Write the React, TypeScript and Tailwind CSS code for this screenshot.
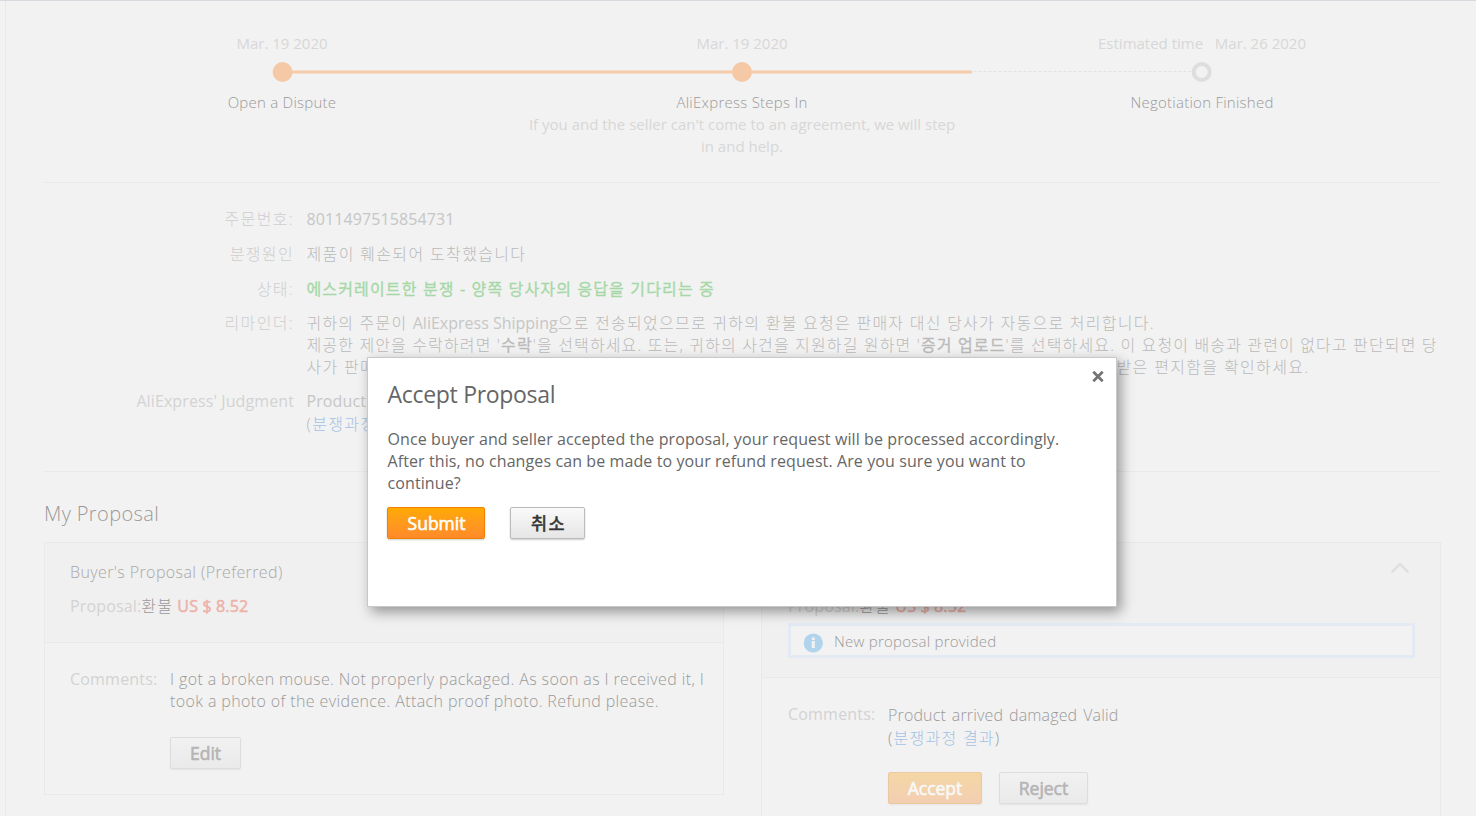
import type { ReactNode } from "react";

function Ko({ children, className = "tracking-[1.35px]" }: { children: ReactNode; className?: string }) {
  return <span className={className}>{children}</span>;
}

function Strong({ children }: { children: ReactNode }) {
  return <b className="font-normal [-webkit-text-stroke:0.3px_currentColor]">{children}</b>;
}

function Row({ label, children, className = "" }: { label: ReactNode; children: ReactNode; className?: string }) {
  return (
    <div className={`flex gap-3 leading-[22px] ${className}`}>
      <div className="w-[250px] shrink-0 text-right text-[#cecece]">{label}</div>
      <div className="flex-1 whitespace-nowrap pl-[0.5px]">{children}</div>
    </div>
  );
}

function Step({ date, title, children }: { date: ReactNode; title: string; children?: ReactNode }) {
  return (
    <div className="flex w-[460px] flex-col items-center text-center">
      <div className="whitespace-pre font-normal text-[#d7d7d7]">{date}</div>
      <div className="mt-[37px] tracking-[0.25px] text-[#9a9a9a]">{title}</div>
      {children}
    </div>
  );
}

function Timeline() {
  return (
    <div className="h-[149px] pl-2 pt-[31px] text-[15px] leading-[22px]">
      <div className="flex">
        <Step date="Mar. 19 2020" title="Open a Dispute" />
        <Step date="Mar. 19 2020" title="AliExpress Steps In">
          <div className="font-normal text-[#d7d7d7]">
            If you and the seller can't come to an agreement, we will step
            <br />
            in and help.
          </div>
        </Step>
        <Step date="Estimated time   Mar. 26 2020" title="Negotiation Finished" />
      </div>
      <svg className="-mt-[95px] ml-[220px]" width="940" height="20" viewBox="0 0 940 20">
        <path d="M10 10H700" stroke="#f6ccaa" strokeWidth="3" />
        <circle cx="10.6" cy="10" r="10" fill="#f5c9a6" />
        <circle cx="470" cy="10" r="10" fill="#f5c9a6" />
        <path d="M701.5 9.5H919" stroke="#e2e2e2" strokeDasharray="3 2" />
        <circle cx="929.7" cy="10" r="8" fill="none" stroke="#dedede" strokeWidth="4" />
      </svg>
    </div>
  );
}

function Button({ className, children }: { className: string; children: ReactNode }) {
  return (
    <button className={`flex h-8 shrink-0 items-center justify-center rounded-[2px] border pt-[2px] text-[17.5px] leading-none font-normal [-webkit-text-stroke:0.6px_currentColor] ${className}`}>
      {children}
    </button>
  );
}

const faded = "border-[#dddddd] bg-linear-to-b from-[#f1f1f1] to-[#eaeaea] text-[#b5b5b5] shadow-[0_1px_2px_rgba(0,0,0,0.06)]";

function Amount() {
  return (
    <div className="leading-[22px] font-normal tracking-[0.15px] text-[#d3d3d3]">
      Proposal:<span className="font-light tracking-[1.3px] text-[#999]">환불</span>
      <span className="ml-1 [-webkit-text-stroke:0.5px_currentColor] text-[#edb1a8]">US $ 8.52</span>
    </div>
  );
}

function Modal() {
  return (
    <div className="absolute left-[367px] top-[357px] h-[250px] w-[750px] border border-[#c8c8c8] bg-white pl-[19px] pt-[21px] font-normal text-[#666] shadow-[4px_5px_12px_rgba(0,0,0,0.38)]">
      <svg className="absolute right-3 top-3" width="12" height="13" viewBox="0 0 12 13">
        <path d="M1.3 1.8L10.7 11.2M10.7 1.8L1.3 11.2" stroke="#737373" strokeWidth="2.7" />
      </svg>
      <h2 className="pl-[0.5px] text-[23px] leading-[30px] tracking-[-0.3px]">Accept Proposal</h2>
      <p className="mt-[19px] whitespace-nowrap pl-[0.5px] text-base leading-[22px] tracking-[0.1px]">
        Once buyer and seller accepted the proposal, your request will be processed accordingly.
        <br />
        After this, no changes can be made to your refund request. Are you sure you want to
        <br />
        continue?
      </p>
      <div className="mt-[13px] flex gap-[25px]">
        <Button className="w-[98px] border-[#f08000] bg-linear-to-b from-[#ffa900] to-[#ff8a29] pl-px text-white shadow-[0_1px_2px_rgba(0,0,0,0.2)]">
          Submit
        </Button>
        <Button className="w-[75px] border-[#bbb] bg-linear-to-b from-[#f9f9f9] to-[#e6e6e6] pl-[2px] tracking-[1.4px] text-[#333] shadow-[0_1px_2px_rgba(0,0,0,0.2)]">
          취소
        </Button>
      </div>
    </div>
  );
}

export default function App() {
  return (
    <div className="relative h-[816px] w-[1476px] overflow-hidden border-t border-[#d8d8de] bg-[#f2f2f2] pl-[5px] font-['Open_Sans','Noto_Sans_CJK_KR',sans-serif] text-base font-light">
      <div className="h-full border-l border-[#e9e9e9] pl-[38px]">
        <div className="w-[1397px]">
          <Timeline />
          <div className="mt-8 h-px bg-[#eaeaea]" />
          <div className="h-[288px] pt-[25px] text-[#bababa]">
            <Row label={<Ko>주문번호:</Ko>}>
              <span className="font-normal tracking-[0.1px] text-[#c6c6c6]">8011497515854731</span>
            </Row>
            <Row className="mt-[13px]" label={<Ko>분쟁원인</Ko>}>
              <Ko>제품이 훼손되어 도착했습니다</Ko>
            </Row>
            <Row className="mt-[13px]" label={<Ko>상태:</Ko>}>
              <Ko className="tracking-[1.15px] text-[#a5d8a6]">
                <Strong>에스커레이트한 분쟁 - 양쪽 당사자의 응답을 기다리는 중</Strong>
              </Ko>
            </Row>
            <Row className="mt-3" label={<Ko>리마인더:</Ko>}>
              <Ko className="tracking-[1.2px]">귀하의 주문이 </Ko>
              <span className="font-normal text-[#c6c6c6]">AliExpress Shipping</span>
              <Ko className="tracking-[1.26px]">으로 전송되었으므로 귀하의 환불 요청은 판매자 대신 당사가 자동으로 처리합니다.</Ko>
              <br />
              <Ko className="tracking-[1.14px]">
                제공한 제안을 수락하려면 '<Strong>수락</Strong>'을 선택하세요. 또는, 귀하의 사건을 지원하길 원하면 '
                <Strong>증거 업로드</Strong>'를 선택하세요. 이 요청이 배송과 관련이 없다고 판단되면 당
              </Ko>
              <div className="flex">
                <span className="w-[810px] tracking-[1.32px]">사가 판매</span>
                <Ko>받은 편지함을 확인하세요.</Ko>
              </div>
            </Row>
            <Row className="mt-3" label={<span className="font-normal tracking-[0.1px] text-[#d3d3d3]">AliExpress' Judgment</span>}>
              <span className="font-normal tracking-[0.1px] text-[#c6c6c6]">Product</span>
              <div className="pt-px">
                <Ko>
                  (<span className="text-[#a3c2e4]">분쟁과정</span>
                </Ko>
              </div>
            </Row>
          </div>
          <div className="h-px bg-[#eaeaea]" />
          <h1 className="mt-7 text-[20px] leading-7 tracking-[0.38px] text-[#9a9a9a]">My Proposal</h1>
          <div className="mt-[14px] flex items-start gap-[37px] text-[#9a9a9a]">
            <section className="h-[253px] w-[680px] border border-[#e9e9e9]">
              <div className="h-[100px] border-b border-[#e9e9e9] bg-[#f0f0f0] pl-[25px] pt-[18px]">
                <div className="leading-[22px] tracking-[0.4px] text-[#a8a8a8]">Buyer's Proposal (Preferred)</div>
                <div className="mt-3">
                  <Amount />
                </div>
              </div>
              <div className="flex pl-[25px] pt-[25px] leading-[22px]">
                <div className="w-[100px] font-normal tracking-[0.2px] text-[#d3d3d3]">Comments:</div>
                <div className="whitespace-nowrap">
                  <span className="tracking-[0.38px]">
                    I got a broken mouse. Not properly packaged. As soon as I received it, I
                    <br />
                    took a photo of the evidence. Attach proof photo. Refund please.
                  </span>
                  <div className="mt-[25px] flex">
                    <Button className={`w-[71px] ${faded}`}>Edit</Button>
                  </div>
                </div>
              </div>
            </section>
            <section className="h-[300px] w-[680px] border border-[#e9e9e9]">
              <div className="h-[135px] border-b border-[#e9e9e9] bg-[#f0f0f0] pl-[26px] pr-[25px] pt-[18px]">
                <div className="flex h-[22px] justify-end pr-[5px]">
                  <svg width="20" height="14" viewBox="0 0 20 14">
                    <path d="M1.5 11.5L10 3L18.5 11.5" fill="none" stroke="#dedede" strokeWidth="2" />
                  </svg>
                </div>
                <div className="mt-3">
                  <Amount />
                </div>
                <div className="mt-[6px] flex h-[35px] items-center border-3 border-[#e4eaf4] bg-[#f2f2f2] pl-3 text-[15px]">
                  <svg className="mr-[11px] mt-1" width="20" height="20" viewBox="0 0 20 20">
                    <circle cx="10.3" cy="10" r="9.6" fill="#afd4ec" />
                    <path d="M8.8 4.5h3v2.5h-3zM8.8 8h3v7h-3z" fill="#f2f2f2" />
                  </svg>
                  <span className="pt-[2px] tracking-[0.25px]">New proposal provided</span>
                </div>
              </div>
              <div className="flex pl-[26px] pt-[25px] leading-[22px]">
                <div className="w-[100px] font-normal tracking-[0.2px] text-[#d3d3d3]">Comments:</div>
                <div className="whitespace-nowrap pt-px">
                  <span className="tracking-[0.15px] [word-spacing:1.6px]">Product arrived damaged Valid</span>
                  <div className="pt-px">
                    <Ko className="tracking-[1.25px]">
                      (<span className="text-[#a3c2e4]">분쟁과정 결과</span>)
                    </Ko>
                  </div>
                  <div className="mt-[23px] flex gap-[17px]">
                    <Button className="w-[94px] border-[#ecc8a2] bg-linear-to-b from-[#f4d7a5] to-[#f3ceb2] text-[#f8f8f8] shadow-[0_1px_2px_rgba(0,0,0,0.06)]">
                      Accept
                    </Button>
                    <Button className={`w-[89px] ${faded}`}>Reject</Button>
                  </div>
                </div>
              </div>
            </section>
          </div>
        </div>
      </div>
      <div className="absolute -top-px left-0">
        <Modal />
      </div>
    </div>
  );
}
